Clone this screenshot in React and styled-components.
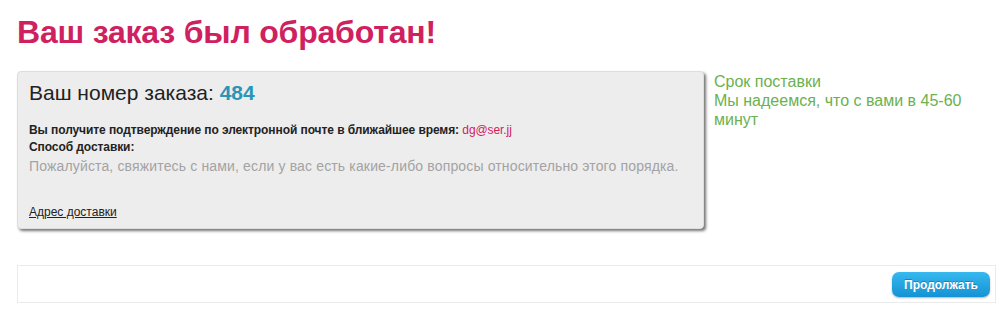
import React from 'react';
import styled, { createGlobalStyle } from 'styled-components';

const GlobalStyle = createGlobalStyle`
  body {
    margin: 0;
    background: #fff;
    font-family: 'Liberation Sans', Arial, sans-serif;
  }
`;

const Page = styled.div`
  width: 979px;
  padding: 14px 7px 0 17px;
`;

const Title = styled.h1`
  margin: 0;
  font-size: 32px;
  line-height: 36px;
  font-weight: bold;
  letter-spacing: -0.2px;
  color: #cf2160;
`;

const Row = styled.div`
  display: flex;
  align-items: flex-start;
  margin-top: 21px;
`;

const Card = styled.div`
  box-sizing: border-box;
  width: 687px;
  height: 158px;
  padding: 9px 11px 0 11px;
  background: #ededed;
  border: 1px solid #dedede;
  border-radius: 4px;
  box-shadow: 2px 2px 3px rgba(0, 0, 0, 0.55);
`;

const OrderNumber = styled.div`
  font-size: 21px;
  line-height: 24px;
  color: #222;

  b {
    color: #2a95b6;
  }
`;

const Info = styled.div`
  margin-top: 17px;
  font-size: 12px;
  line-height: 17px;
  font-weight: bold;
  letter-spacing: -0.08px;
  color: #222;
`;

const Email = styled.span`
  font-weight: normal;
  color: #cf2160;
`;

const Note = styled.div`
  font-size: 14px;
  line-height: 20px;
  letter-spacing: 0.15px;
  color: #a3a3a3;
`;

const AddressLink = styled.a`
  display: inline-block;
  margin-top: 28px;
  font-size: 12px;
  line-height: 17px;
  color: #222;
  text-decoration: underline;
`;

const Delivery = styled.div`
  width: 272px;
  margin-left: 10px;
  padding-top: 1px;
  font-size: 16px;
  line-height: 19px;
  color: #6bb14e;
`;

const Footer = styled.div`
  box-sizing: border-box;
  display: flex;
  justify-content: flex-end;
  height: 38px;
  margin-top: 36px;
  padding: 6px 5px;
  border: 1px solid #ebebeb;
`;

const Button = styled.button`
  width: 98px;
  height: 25px;
  padding: 0;
  border: none;
  border-radius: 7px;
  background: linear-gradient(#37b8ee, #1492d4);
  box-shadow: 0 1px 2px rgba(0, 0, 0, 0.3);
  color: #fff;
  font-family: 'Liberation Sans', Arial, sans-serif;
  font-size: 12px;
  font-weight: bold;
  text-shadow: 0 -1px 0 rgba(0, 0, 0, 0.25);
  cursor: pointer;
`;

const App = () => {
  return (
    <Page>
      <GlobalStyle />
      <Title>Ваш заказ был обработан!</Title>

      <Row>
        <Card>
          <OrderNumber>
            Ваш номер заказа: <b>484</b>
          </OrderNumber>
          <Info>
            Вы получите подтверждение по электронной почте в ближайшее время:{' '}
            <Email>dg@ser.jj</Email>
            <br />
            Способ доставки:
          </Info>
          <Note>
            Пожалуйста, свяжитесь с нами, если у вас есть какие-либо вопросы относительно этого порядка.
          </Note>
          <AddressLink href='#'>Адрес доставки</AddressLink>
        </Card>

        <Delivery>
          Срок поставки
          <br />
          Мы надеемся, что с вами в 45-60 минут
        </Delivery>
      </Row>

      <Footer>
        <Button>Продолжать</Button>
      </Footer>
    </Page>
  );
};

export default App;
